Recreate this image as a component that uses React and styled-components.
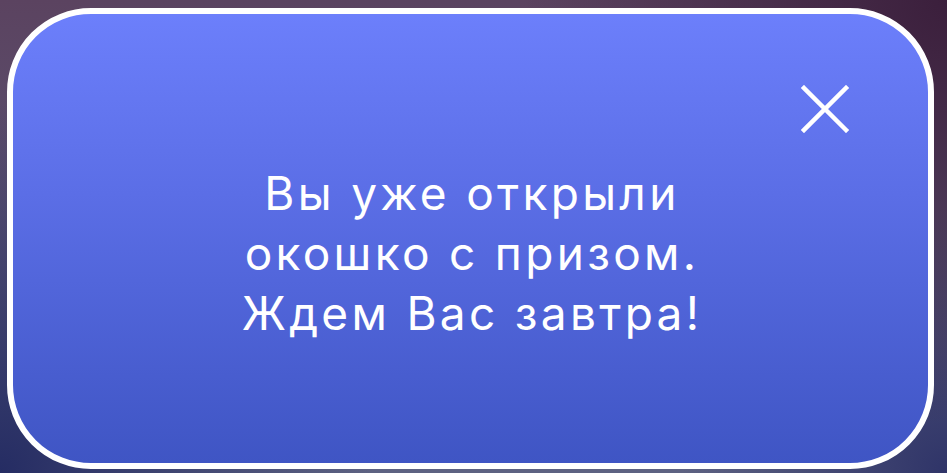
import styled, { createGlobalStyle } from "styled-components";

const GlobalStyle = createGlobalStyle`
    html, body {
        margin: 0;
        padding: 0;
        width: 947px;
        height: 473px;
        overflow: hidden;
    }
`;

const Backdrop = styled.div`
    box-sizing: border-box;
    width: 947px;
    height: 473px;
    padding: 8px 13px 4px 7px;
    display: flex;
    background:
        radial-gradient(circle at 100% 0%, #3b1f3c 0%, rgba(59, 31, 60, 0) 40%),
        radial-gradient(circle at 0% 100%, #252c63 0%, rgba(37, 44, 99, 0) 35%),
        radial-gradient(circle at 100% 100%, #2f3468 0%, rgba(47, 52, 104, 0) 25%),
        linear-gradient(180deg, #5b4360 0%, #5a5574 60%, #5d6282 100%);
`;

const Card = styled.div`
    position: relative;
    box-sizing: border-box;
    flex: 1;
    border: 6px solid #ffffff;
    border-radius: 84px;
    background: linear-gradient(180deg, #6c7ffb 0%, #5b6ee6 40%, #3f55c4 100%);
    display: flex;
    align-items: center;
    justify-content: center;
    padding-top: 28px;
`;

const Message = styled.p`
    margin: 0;
    padding-left: 3px;
    color: #ffffff;
    font-family: Inter, "Noto Sans", sans-serif;
    font-size: 46px;
    font-weight: 400;
    letter-spacing: 3.3px;
    line-height: 60px;
    text-align: center;
`;

const CloseButton = styled.button`
    position: absolute;
    top: 71px;
    right: 79px;
    width: 48px;
    height: 48px;
    padding: 0;
    border: 0;
    background: transparent;
    cursor: pointer;
    display: flex;
    align-items: center;
    justify-content: center;
`;

const CloseIcon = () => (
    <svg width="48" height="48" viewBox="0 0 48 48" fill="none">
        <path d="M3 3L45 45M45 3L3 45" stroke="#ffffff" strokeWidth="4.5" strokeLinecap="square" />
    </svg>
);

const App = () => {
    return (
        <>
            <GlobalStyle />
            <Backdrop>
                <Card>
                    <CloseButton aria-label="Закрыть">
                        <CloseIcon />
                    </CloseButton>
                    <Message>
                        Вы уже открыли
                        <br />
                        окошко с призом.
                        <br />
                        Ждем Вас завтра!
                    </Message>
                </Card>
            </Backdrop>
        </>
    );
};

export default App;
